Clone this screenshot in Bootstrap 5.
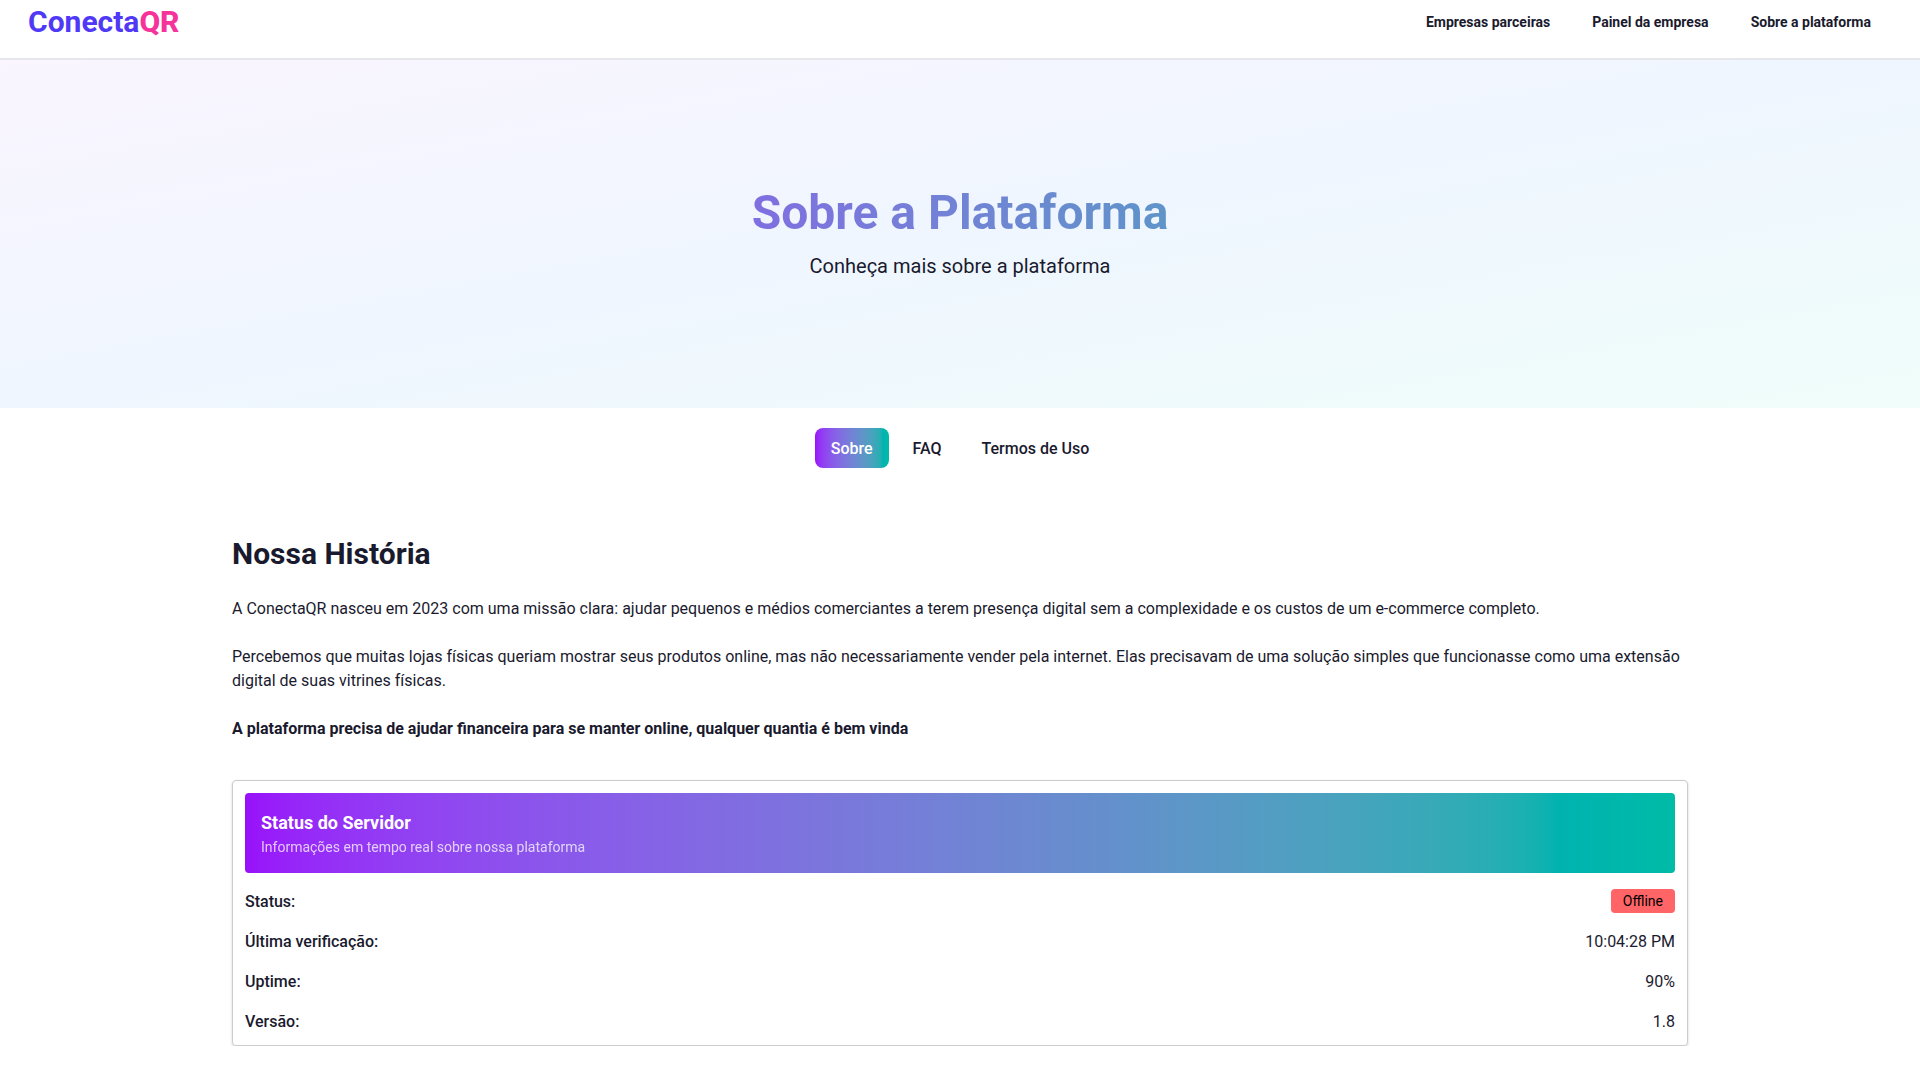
<!DOCTYPE html>
<html lang="pt-BR">
<head>
<meta charset="utf-8">
<meta name="viewport" content="width=device-width, initial-scale=1">
<title>ConectaQR</title>
<link rel="stylesheet" href="https://cdn.jsdelivr.net/npm/bootstrap@5.3.0/dist/css/bootstrap.min.css">
<style>
  :root {
    --brand-gradient: linear-gradient(to right in oklab, oklch(55.8% 0.288 302.321), oklch(70.4% 0.14 182.503));
    --ink: #1a1a2e;
  }
  body { font-family: Roboto, "Liberation Sans", sans-serif; color: var(--ink); background: #fff; }
  .site-header { height: 60px; padding: 0 28px; border-bottom: 2px solid #e5e7eb; }
  .site-logo { font-size: 30px; line-height: 44px; font-weight: 700; color: #4f39f6; }
  .site-logo span { color: #f6339a; font-weight: 800; }
  .site-links { gap: 42px; padding-right: 21px; }
  .site-links a { font-size: 14px; line-height: 44px; font-weight: 700; color: var(--ink); }
  .hero { padding: 124px 0 128px; background: linear-gradient(to bottom right in oklab, oklch(97.7% 0.014 308.299), oklch(97% 0.014 254.604), oklch(98.4% 0.014 180.72)); }
  .hero h1 { font-size: 48px; line-height: 58px; background: var(--brand-gradient); background-clip: text; -webkit-background-clip: text; color: transparent; }
  .hero p { font-size: 20px; line-height: 28px; margin: 10px 0 0; }
  .page-wrap { max-width: 1536px; padding: 0 40px; }
  .tab-btn { padding: 9px 16px 7px; border: 0; border-radius: 8px; font-weight: 500; line-height: 24px; background: transparent; color: var(--ink); }
  .tab-btn.active { background: var(--brand-gradient); color: #fff; }
  .story { padding-top: 68px; }
  .story h2 { font-size: 30px; line-height: 36px; margin-bottom: 25px; }
  .story p { line-height: 24px; margin-bottom: 24px; }
  .status-box { margin-top: 39px; padding: 12px 12px 10px; border: 1px solid #ccc; border-radius: 4px; box-shadow: 0 1px 3px rgba(0,0,0,.1), 0 1px 2px rgba(0,0,0,.1); }
  .status-head { border-radius: 4px; background: var(--brand-gradient); }
  .status-head h3 { font-size: 18px; line-height: 28px; font-weight: 700; }
  .status-head p { font-size: 14px; line-height: 20px; margin: 0; opacity: .75; }
  .status-rows { gap: 14px; line-height: 26px; }
  .status-rows dt { font-weight: 500; }
  .state-tag { font-size: 14px; line-height: 24px; padding: 0 12px; border-radius: 4px; background: #ff6467; color: #000; }
</style>
</head>
<body>
<header class="site-header d-flex justify-content-between align-items-start">
  <a class="site-logo text-decoration-none" href="#">Conecta<span>QR</span></a>
  <nav class="site-links d-flex">
    <a class="text-decoration-none" href="#">Empresas parceiras</a>
    <a class="text-decoration-none" href="#">Painel da empresa</a>
    <a class="text-decoration-none" href="#">Sobre a plataforma</a>
  </nav>
</header>
<section class="hero text-center">
  <div class="page-wrap mx-auto">
    <h1 class="fw-bold mb-0">Sobre a Plataforma</h1>
    <p>Conheça mais sobre a plataforma</p>
  </div>
</section>
<main class="page-wrap mx-auto">
  <div class="d-flex justify-content-center gap-2 pt-3 mt-1">
    <button class="tab-btn active" type="button">Sobre</button>
    <button class="tab-btn" type="button">FAQ</button>
    <button class="tab-btn" type="button">Termos de Uso</button>
  </div>
  <section class="story">
    <h2 class="fw-bold">Nossa História</h2>
    <p>A ConectaQR nasceu em 2023 com uma missão clara: ajudar pequenos e médios comerciantes a terem presença digital sem a complexidade e os custos de um e-commerce completo.</p>
    <p>Percebemos que muitas lojas físicas queriam mostrar seus produtos online, mas não necessariamente vender pela internet. Elas precisavam de uma solução simples que funcionasse como uma extensão digital de suas vitrines físicas.</p>
    <p class="fw-bold mb-0">A plataforma precisa de ajudar financeira para se manter online, qualquer quantia é bem vinda</p>
  </section>
  <section class="status-box">
    <div class="status-head text-white p-3">
      <h3 class="mb-0">Status do Servidor</h3>
      <p>Informações em tempo real sobre nossa plataforma</p>
    </div>
    <dl class="status-rows d-flex flex-column mt-3 mb-0">
      <div class="d-flex justify-content-between align-items-start"><dt>Status:</dt><dd class="mb-0 state-tag">Offline</dd></div>
      <div class="d-flex justify-content-between"><dt>Última verificação:</dt><dd class="mb-0">10:04:28 PM</dd></div>
      <div class="d-flex justify-content-between"><dt>Uptime:</dt><dd class="mb-0">90%</dd></div>
      <div class="d-flex justify-content-between"><dt>Versão:</dt><dd class="mb-0">1.8</dd></div>
    </dl>
  </section>
</main>
<script src="https://cdn.jsdelivr.net/npm/bootstrap@5.3.0/dist/js/bootstrap.bundle.min.js"></script>
</body>
</html>
